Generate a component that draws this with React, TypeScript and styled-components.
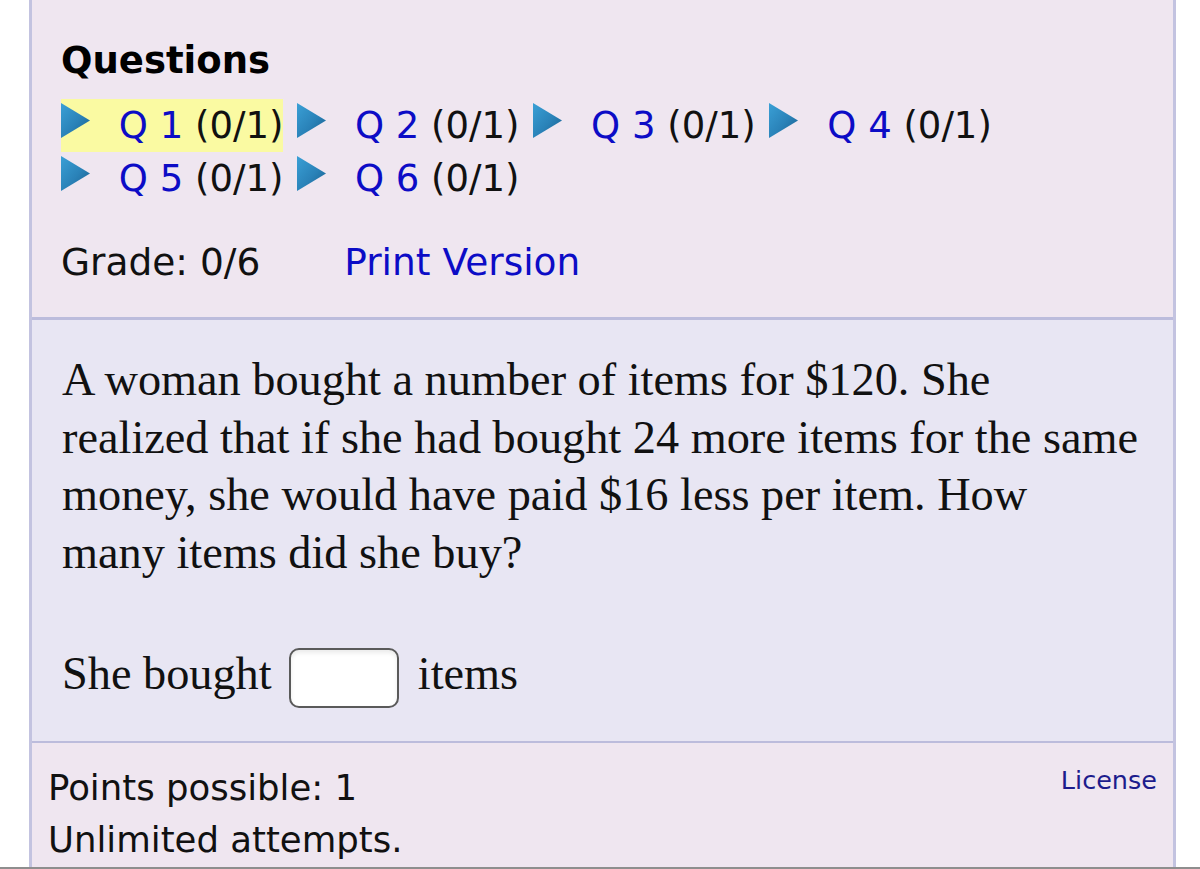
import React from "react";
import styled, { createGlobalStyle } from "styled-components";

const GlobalStyle = createGlobalStyle`
  html, body {
    margin: 0;
    padding: 0;
    background: #ffffff;
  }
  * {
    box-sizing: border-box;
  }
`;

const Viewport = styled.div`
  height: 869px;
  overflow: hidden;
  border-bottom: 2px solid #8e8e8e;
`;

const Page = styled.div`
  margin: 0 24px 0 29px;
  border-left: 3px solid #c3c3e0;
  border-right: 3px solid #c3c3e0;
  font-family: "DejaVu Sans", Verdana, sans-serif;
  color: #111111;
`;

const NavPanel = styled.div`
  background: #efe6f0;
  padding: 39px 30px 28px 29px;
`;

const Heading = styled.h2`
  margin: 0 0 16px;
  font-size: 37px;
  line-height: 44px;
  font-weight: bold;
  color: #000;
`;

const QuestionList = styled.div`
  font-size: 37px;
  line-height: 53px;
`;

const QuestionItem = styled.span<{ $current?: boolean }>`
  display: inline-block;
  height: 53px;
  margin-right: 2px;
  white-space: nowrap;
  background: ${({ $current }) => ($current ? "#fafaa2" : "transparent")};
`;

const Arrow = styled.svg`
  width: 31px;
  height: 35px;
  margin-right: 15px;
  vertical-align: baseline;
`;

const QLink = styled.a`
  color: #0c0cc6;
  text-decoration: none;
`;

const GradeRow = styled.div`
  margin-top: 31px;
  font-size: 37.5px;
  line-height: 53px;
`;

const PrintLink = styled.a`
  margin-left: 84px;
  color: #0c0cc6;
  text-decoration: none;
`;

const QuestionPanel = styled.div`
  background: #e8e6f3;
  border-top: 3px solid #bcbcdc;
  padding: 31px 30px 33px 30px;
  font-family: "Liberation Serif", "Times New Roman", serif;
  font-size: 46.3px;
  line-height: 57.5px;
  color: #111;
`;

const Prompt = styled.p`
  margin: 0;
`;

const AnswerLine = styled.p`
  margin: 64px 0 0;
`;

const AnswerBox = styled.input`
  width: 110px;
  height: 60px;
  margin: 0 7px 0 6px;
  padding: 0 8px;
  vertical-align: middle;
  border: 2.5px solid #5a5a5a;
  border-radius: 10px;
  background: #ffffff;
  font-size: 30px;
  box-shadow: inset 0 3px 4px rgba(0, 0, 0, 0.08);
`;

const InfoPanel = styled.div`
  background: #efe6f0;
  border-top: 2px solid #bcbcdc;
  padding: 19px 16px 40px 16px;
  display: flex;
  justify-content: space-between;
  align-items: flex-start;
`;

const InfoText = styled.div`
  font-size: 35.5px;
  line-height: 52px;
`;

const LicenseLink = styled.a`
  margin-top: 3px;
  font-size: 25.5px;
  line-height: 30px;
  color: #1c1c8c;
  text-decoration: none;
`;

function PlayArrow() {
  return (
    <Arrow viewBox="0 0 31 35" aria-hidden="true">
      <defs>
        <linearGradient id="arrowFill" x1="0" y1="0" x2="1" y2="1">
          <stop offset="0" stopColor="#3aa0d6" />
          <stop offset="0.55" stopColor="#2a82b8" />
          <stop offset="1" stopColor="#175e8c" />
        </linearGradient>
      </defs>
      <polygon points="0,0 29,17.5 0,35" fill="url(#arrowFill)" />
    </Arrow>
  );
}

const questions = [1, 2, 3, 4, 5, 6];

const promptLines = [
  "A woman bought a number of items for $120. She",
  "realized that if she had bought 24 more items for the same",
  "money, she would have paid $16 less per item. How",
  "many items did she buy?",
];

export default function App() {
  return (
    <>
      <GlobalStyle />
      <Viewport>
        <Page>
          <NavPanel>
            <Heading>Questions</Heading>
            <QuestionList>
              {questions.map((n, i) => (
                <React.Fragment key={n}>
                  <QuestionItem $current={n === 1}>
                    <PlayArrow /> <QLink href="#">Q {n}</QLink> (0/1)
                  </QuestionItem>
                  {i === 3 ? <br /> : i < questions.length - 1 ? " " : null}
                </React.Fragment>
              ))}
            </QuestionList>
            <GradeRow>
              Grade: 0/6
              <PrintLink href="#">Print Version</PrintLink>
            </GradeRow>
          </NavPanel>
          <QuestionPanel>
            <Prompt>
              {promptLines.map((line, i) => (
                <React.Fragment key={i}>
                  {line}
                  {i < promptLines.length - 1 && <br />}
                </React.Fragment>
              ))}
            </Prompt>
            <AnswerLine>
              She bought <AnswerBox type="text" aria-label="answer" /> items
            </AnswerLine>
          </QuestionPanel>
          <InfoPanel>
            <InfoText>
              Points possible: 1
              <br />
              Unlimited attempts.
            </InfoText>
            <LicenseLink href="#">License</LicenseLink>
          </InfoPanel>
        </Page>
      </Viewport>
    </>
  );
}
